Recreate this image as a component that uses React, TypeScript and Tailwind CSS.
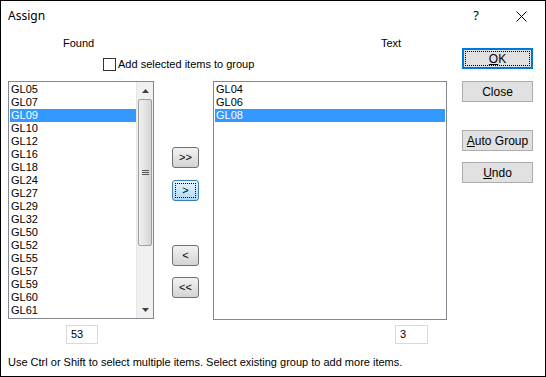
const found = [
  "GL05", "GL07", "GL09", "GL10", "GL12", "GL16", "GL18", "GL24", "GL27",
  "GL29", "GL32", "GL50", "GL52", "GL55", "GL57", "GL59", "GL60", "GL61", "GL62",
];
const chosen = ["GL04", "GL06", "GL08"];

function ListRow({ label, selected }: { label: string; selected: boolean }) {
  return (
    <div
      className={
        "h-[13px] leading-[13px] pl-[1px] whitespace-nowrap " +
        (selected ? "bg-[#3399ff] text-white" : "text-black")
      }
    >
      {label}
    </div>
  );
}

function ScrollBar() {
  return (
    <div className="w-[17px] h-full flex flex-col bg-[#f0f0f0] border-l border-[#e6e6e6]">
      {/* up arrow */}
      <div className="h-[17px] flex items-center justify-center">
        <svg width="7" height="4" viewBox="0 0 7 4">
          <path d="M3.5 0 L7 4 L0 4 Z" fill="#404040" />
        </svg>
      </div>
      {/* thumb */}
      <div className="h-[147px] mx-[1px] rounded-[2px] border border-[#9e9e9e] bg-gradient-to-r from-[#f0f0f0] via-[#e4e4e4] to-[#d4d4d4] flex items-center justify-center">
        <div className="flex flex-col gap-[1px]">
          <div className="w-[7px] h-[1px] bg-[#555]" />
          <div className="w-[7px] h-[1px] bg-[#555]" />
          <div className="w-[7px] h-[1px] bg-[#555]" />
        </div>
      </div>
      <div className="flex-1" />
      {/* down arrow */}
      <div className="h-[17px] flex items-center justify-center">
        <svg width="7" height="4" viewBox="0 0 7 4">
          <path d="M0 0 L7 0 L3.5 4 Z" fill="#404040" />
        </svg>
      </div>
    </div>
  );
}

function MoveButton({ label, focused }: { label: string; focused?: boolean }) {
  return (
    <div
      className={
        "w-[27px] h-[21px] rounded-[3px] border flex items-center justify-center p-[2px] " +
        (focused
          ? "border-[#3c7fb1] bg-gradient-to-b from-[#eaf6fd] to-[#a7d9f5]"
          : "border-[#707070] bg-gradient-to-b from-[#f2f2f2] to-[#d4d4d4]")
      }
    >
      <div
        className={
          "w-full h-full flex items-center justify-center text-[11px] leading-none " +
          (focused ? "border border-dotted border-black" : "")
        }
      >
        {label}
      </div>
    </div>
  );
}

function DlgButton({ children, isDefault }: { children: React.ReactNode; isDefault?: boolean }) {
  return (
    <div
      className={
        "w-[71px] h-[21px] bg-[#e1e1e1] flex items-center justify-center " +
        (isDefault ? "border-2 border-[#0078d7] p-[1px]" : "border border-[#adadad]")
      }
    >
      <div
        className={
          "w-full h-full flex items-center justify-center text-[12px] leading-none " +
          (isDefault ? "border border-dotted border-black" : "")
        }
      >
        {children}
      </div>
    </div>
  );
}

export default function App() {
  return (
    <div
      className="w-[546px] h-[377px] border border-black bg-white flex flex-col text-[11px] text-black overflow-hidden"
      style={{ fontFamily: "Tahoma, 'Liberation Sans', Arial, sans-serif" }}
    >
      {/* title bar */}
      <div className="h-[30px] flex items-center">
        <div className="pl-[7px] text-[12px] flex-1" style={{ fontFamily: "'Noto Sans', 'Liberation Sans', sans-serif" }}>
          Assign
        </div>
        <div className="w-[12px] text-[13px] text-center mr-[34px]" style={{ fontFamily: "'Noto Sans', sans-serif" }}>?</div>
        <div className="mr-[18px] flex items-center">
          <svg width="11" height="11" viewBox="0 0 11 11">
            <path d="M0.5 0.5 L10.5 10.5 M10.5 0.5 L0.5 10.5" stroke="#000" strokeWidth="1" />
          </svg>
        </div>
      </div>

      {/* body */}
      <div className="flex flex-row pl-[7px]">
        <div className="w-[439px] flex flex-col">
          <div className="mt-[5px] h-[14px] leading-[14px] flex">
            <span className="w-[373px] pl-[55px]">Found</span>
            <span>Text</span>
          </div>
          <div className="mt-[8px] h-[13px] flex items-center pl-[95px]">
            <div className="w-[13px] h-[13px] border border-[#333] bg-white" />
            <span className="ml-[2px] leading-[13px]">Add selected items to group</span>
          </div>

          <div className="mt-[10px] flex flex-row">
            {/* found list */}
            <div className="w-[146px] h-[238px] border border-[#828790] flex flex-row overflow-hidden">
              <div className="flex-1 pt-[1px] pl-[1px] overflow-hidden">
                {found.map((g) => (
                  <ListRow key={g} label={g} selected={g === "GL09"} />
                ))}
              </div>
              <ScrollBar />
            </div>

            {/* move buttons */}
            <div className="w-[59px] pl-[18px] flex flex-col">
              <div className="mt-[66px]">
                <MoveButton label=">>" />
              </div>
              <div className="mt-[12px]">
                <MoveButton label=">" focused />
              </div>
              <div className="mt-[44px]">
                <MoveButton label="<" />
              </div>
              <div className="mt-[11px]">
                <MoveButton label="<<" />
              </div>
            </div>

            {/* text list */}
            <div className="w-[234px] h-[239px] border border-[#828790] pt-[1px] px-[1px]">
              {chosen.map((g) => (
                <ListRow key={g} label={g} selected={g === "GL08"} />
              ))}
            </div>
          </div>

          <div className="mt-[5px] h-[19px] flex">
            <div className="ml-[58px] w-[32px] h-[19px] border border-[#d9d9d9] pl-[4px] leading-[17px]">53</div>
            <div className="ml-[297px] w-[33px] h-[19px] border border-[#d9d9d9] pl-[4px] leading-[17px]">3</div>
          </div>
        </div>

        {/* dialog buttons */}
        <div className="ml-[15px] flex flex-col">
          <div className="mt-[17px]">
            <DlgButton isDefault>
              <span className="underline">O</span>K
            </DlgButton>
          </div>
          <div className="mt-[12px]">
            <DlgButton>Close</DlgButton>
          </div>
          <div className="mt-[28px]">
            <DlgButton>
              <span className="underline">A</span>uto Group
            </DlgButton>
          </div>
          <div className="mt-[11px]">
            <DlgButton>
              <span className="underline">U</span>ndo
            </DlgButton>
          </div>
        </div>
      </div>

      <div className="mt-[11px] pl-[7px] h-[14px] leading-[14px] whitespace-nowrap">
        Use Ctrl or Shift to select multiple items. Select existing group to add more items.
      </div>
    </div>
  );
}
